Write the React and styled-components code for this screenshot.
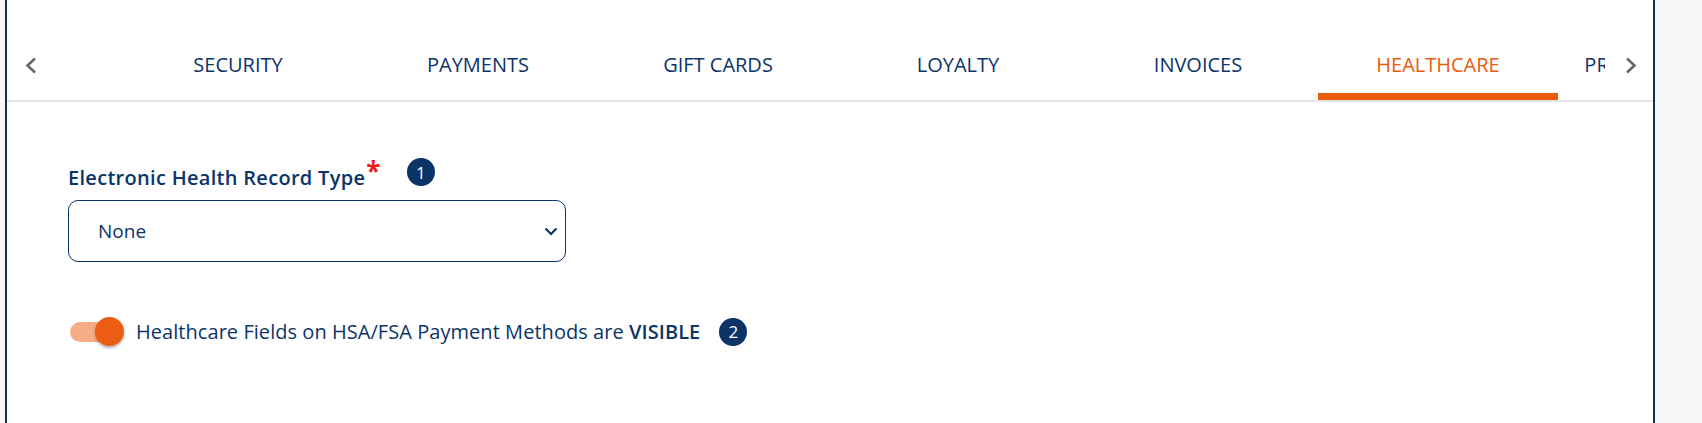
import styled, { createGlobalStyle } from 'styled-components';

const GlobalStyle = createGlobalStyle`
  body {
    margin: 0;
    background: #f7f7f7;
    font-family: "Open Sans", Lato, sans-serif;
  }
`;

const Card = styled.div`
  margin-left: 5px;
  width: 1650px;
  min-height: 423px;
  box-sizing: border-box;
  background: #fff;
  border-left: 2px solid #0b2f5f;
  border-right: 2px solid #0b2f5f;
  padding-top: 30px;
`;

const TabBar = styled.div`
  display: flex;
  height: 70px;
  border-bottom: 2px solid #e3e3e3;
`;

const ScrollButton = styled.button`
  flex: 0 0 48px;
  display: flex;
  align-items: center;
  justify-content: center;
  padding: 0 0 0 ${p => (p.$right ? '4px' : '0')};
  background: none;
  border: none;
  cursor: pointer;
`;

const Scroller = styled.div`
  flex: 1;
  overflow: hidden;
`;

const Track = styled.div`
  display: flex;
  height: 100%;
  padding-left: ${p => p.$scrolled}px;
`;

const Tab = styled.div`
  flex: 0 0 240px;
  display: flex;
  align-items: center;
  justify-content: center;
  padding-bottom: 2px;
  position: relative;
  font-size: 20px;
  color: ${p => (p.$active ? '#ea5b0c' : '#0b3468')};
  white-space: nowrap;

  &::after {
    content: '';
    position: absolute;
    left: 0;
    right: 0;
    bottom: 0;
    height: 7px;
    background: ${p => (p.$active ? '#ea5b0c' : 'transparent')};
  }
`;

const Form = styled.div`
  padding: 56px 0 0 61px;
`;

const LabelRow = styled.div`
  display: flex;
  align-items: flex-start;
`;

const Label = styled.label`
  margin-top: 8px;
  font-size: 20px;
  line-height: 24px;
  font-weight: 600;
  letter-spacing: 0.3px;
  color: #0b3468;
`;

const Required = styled.span`
  position: relative;
  top: -4px;
  color: #ee1c1c;
  font-size: 26px;
  font-weight: 700;
  line-height: 0;
  margin-left: 1px;
`;

const Badge = styled.span`
  display: inline-flex;
  align-items: center;
  justify-content: center;
  flex: 0 0 28px;
  height: 28px;
  border-radius: 50%;
  background: #0b3366;
  color: #fff;
  font-size: 17px;
  margin-left: ${p => p.$gap}px;
`;

const SelectBox = styled.div`
  margin-top: 10px;
  width: 498px;
  height: 62px;
  box-sizing: border-box;
  border: 1.5px solid #0b3366;
  border-radius: 10px;
  display: flex;
  align-items: center;
  justify-content: space-between;
  padding: 0 7px 0 29px;
  font-size: 19px;
  color: #0b3468;
`;

const ToggleRow = styled.div`
  margin-top: 55px;
  display: flex;
  align-items: center;
`;

const Switch = styled.span`
  position: relative;
  flex: 0 0 54px;
  height: 29px;
  margin-left: 2px;

  &::before {
    content: '';
    position: absolute;
    left: 0;
    top: 5px;
    width: 46px;
    height: 20px;
    border-radius: 10px;
    background: #f6ad86;
  }

  &::after {
    content: '';
    position: absolute;
    right: 0;
    top: 0;
    width: 29px;
    height: 29px;
    border-radius: 50%;
    background: #ec5d13;
    box-shadow: 0 2px 3px rgba(0, 0, 0, 0.3);
  }
`;

const ToggleText = styled.span`
  margin-left: 12px;
  font-size: 20px;
  letter-spacing: 0.05px;
  color: #0b3468;

  b {
    font-weight: 600;
  }
`;

const tabs = ['SECURITY', 'PAYMENTS', 'GIFT CARDS', 'LOYALTY', 'INVOICES', 'HEALTHCARE', 'PRODUCT CATALOG'];

function Chevron({ dir }) {
  const pts = dir === 'left' ? '10,1.5 2.5,8.5 10,15.5' : '2,1.5 9.5,8.5 2,15.5';
  return (
    <svg width="12" height="17" viewBox="0 0 12 17">
      <polyline points={pts} fill="none" stroke="#676767" strokeWidth="2.6" />
    </svg>
  );
}

export default function App() {
  return (
    <>
      <GlobalStyle />
      <Card>
        <TabBar>
          <ScrollButton aria-label="previous"><Chevron dir="left" /></ScrollButton>
          <Scroller>
            <Track $scrolled={63}>
              {tabs.map(t => (
                <Tab key={t} $active={t === 'HEALTHCARE'}>{t}</Tab>
              ))}
            </Track>
          </Scroller>
          <ScrollButton $right aria-label="next"><Chevron dir="right" /></ScrollButton>
        </TabBar>
        <Form>
          <LabelRow>
            <Label>Electronic Health Record Type<Required>*</Required></Label>
            <Badge $gap={26}>1</Badge>
          </LabelRow>
          <SelectBox>
            <span>None</span>
            <svg width="14" height="9" viewBox="0 0 14 9">
              <polyline points="1.5,1.5 7,7 12.5,1.5" fill="none" stroke="#0b3366" strokeWidth="2.2" />
            </svg>
          </SelectBox>
          <ToggleRow>
            <Switch />
            <ToggleText>Healthcare Fields on HSA/FSA Payment Methods are <b>VISIBLE</b></ToggleText>
            <Badge $gap={19}>2</Badge>
          </ToggleRow>
        </Form>
      </Card>
    </>
  );
}
